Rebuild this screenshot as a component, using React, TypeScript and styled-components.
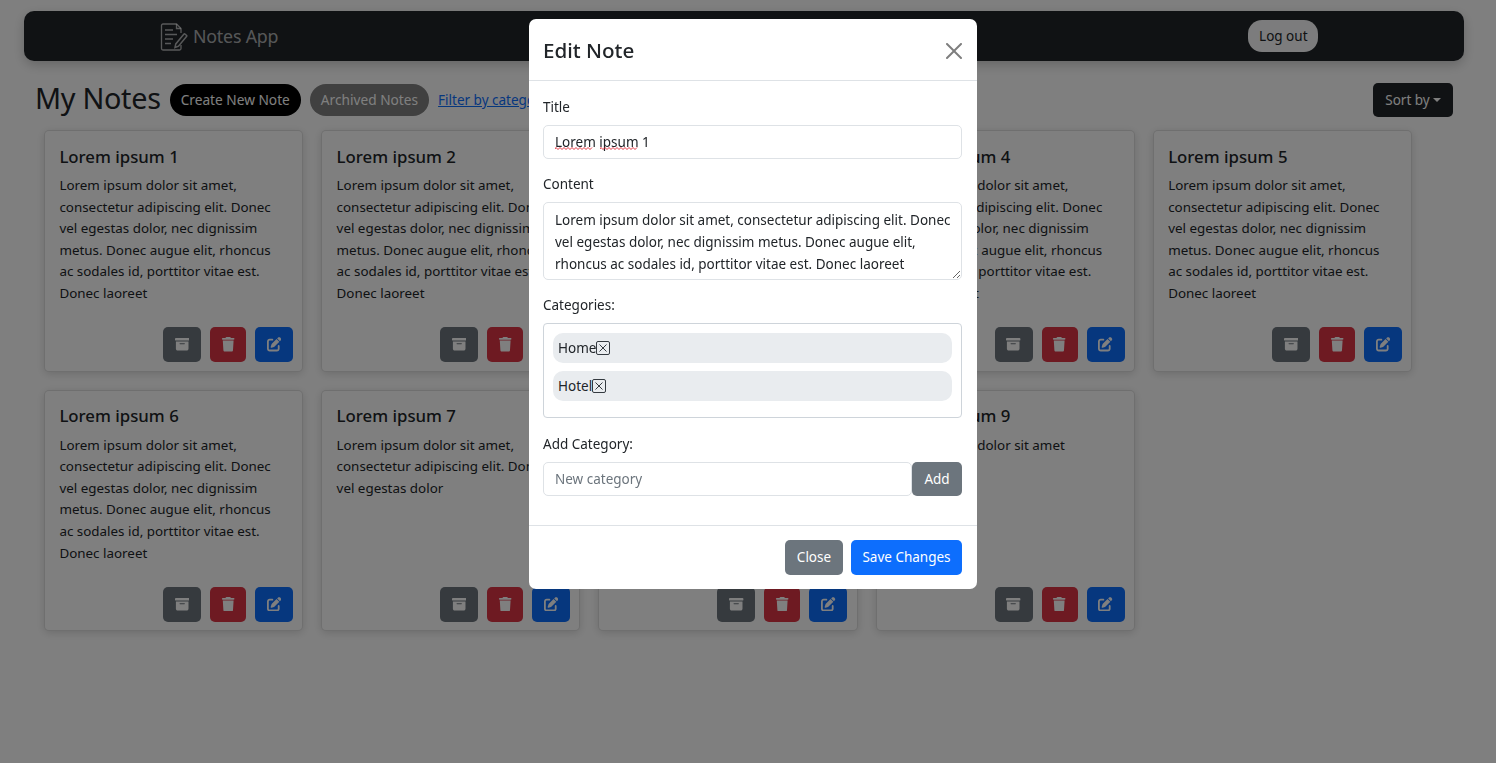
import styled, { createGlobalStyle } from "styled-components";
import { FaBoxArchive, FaTrash, FaPenToSquare } from "react-icons/fa6";

const GlobalStyle = createGlobalStyle`
	html, body {
		margin: 0;
		background: #fff;
		color: #212529;
		font-family: "Noto Sans", "Open Sans", sans-serif;
		font-size: 14.4px;
		line-height: 1.5;
	}
	* {
		box-sizing: border-box;
	}
`;

const Page = styled.div`
	min-height: 763px;
	padding: 11px 32px 0 24px;
`;

const Navbar = styled.nav`
	display: flex;
	align-items: center;
	height: 50px;
	padding-left: 136px;
	background: #212529;
	border-radius: 10px;
	box-shadow: 0 4px 12px rgba(0, 0, 0, 0.2);
`;

const Brand = styled.a`
	display: flex;
	align-items: center;
	gap: 5px;
	padding-top: 1px;
	color: rgba(255, 255, 255, 0.65);
	font-size: 17.8px;
	letter-spacing: -0.2px;
`;

const LogoutButton = styled.button`
	margin-left: 970px;
	width: 70px;
	height: 32px;
	padding: 0;
	border: none;
	border-radius: 14px;
	background: #f8f9fa;
	color: #212529;
	font: inherit;
	font-size: 13.5px;
`;

const Toolbar = styled.div`
	display: flex;
	align-items: center;
	height: 34px;
	margin: 22px 11px 13px 11px;
`;

const Heading = styled.h1`
	margin: -4px 9px 0 0;
	font-size: 28.8px;
	font-weight: 400;
	letter-spacing: -0.3px;
	line-height: 1.2;
`;

const PillButton = styled.button<{ $archived?: boolean }>`
	height: 32px;
	margin-right: 9px;
	padding: 0 11px;
	border: none;
	border-radius: 16px;
	background: ${(p) => (p.$archived ? "#808080" : "#000")};
	color: #fff;
	font: inherit;
	font-size: 13.7px;
	white-space: nowrap;
`;

const FilterLink = styled.a`
	color: #0d6efd;
	font-size: 13.5px;
	text-decoration: underline;
`;

const SortButton = styled.button`
	display: flex;
	align-items: center;
	gap: 3px;
	width: 80px;
	height: 34px;
	margin-left: auto;
	justify-content: center;
	border: none;
	border-radius: 5px;
	background: #212529;
	color: #fff;
	font: inherit;
	font-size: 13.5px;
`;

const Caret = styled.span`
	border-top: 4px solid currentColor;
	border-left: 4px solid transparent;
	border-right: 4px solid transparent;
`;

const CardGrid = styled.div`
	display: flex;
	flex-wrap: wrap;
	gap: 18px;
	padding-left: 20px;
`;

const Card = styled.article`
	display: flex;
	flex-direction: column;
	width: 259.2px;
	height: 241.6px;
	padding: 14px 9.2px 8.6px 14.4px;
	background: #fff;
	border: 1px solid rgba(0, 0, 0, 0.125);
	border-radius: 5px;
	box-shadow: 0 2px 8px rgba(0, 0, 0, 0.15);
`;

const CardTitle = styled.h5`
	margin: 0 0 8.4px;
	padding-top: 1.6px;
	font-size: 16.8px;
	font-weight: 500;
	line-height: 20px;
`;

const CardText = styled.p`
	flex: 1;
	margin: 0;
	padding-right: 11px;
	font-size: 13.4px;
	line-height: 21.6px;
`;

const CardActions = styled.div`
	display: flex;
	justify-content: flex-end;
	gap: 9px;
`;

const IconButton = styled.button<{ $bg: string; $w: number }>`
	display: flex;
	align-items: center;
	justify-content: center;
	width: ${(p) => p.$w}px;
	height: 35px;
	padding: 0;
	border: none;
	border-radius: 5px;
	background: ${(p) => p.$bg};
	color: #fff;
	font-size: 14.4px;
`;

const Backdrop = styled.div`
	position: fixed;
	inset: 0;
	display: flex;
	justify-content: center;
	align-items: flex-start;
	padding: 19px 0 0 10px;
	background: rgba(0, 0, 0, 0.5);
`;

const Modal = styled.div`
	width: 448px;
	height: 570px;
	background: #fff;
	border-radius: 7px;
`;

const ModalHeader = styled.header`
	display: flex;
	align-items: center;
	justify-content: space-between;
	height: 62px;
	padding: 2px 15px 0 14px;
	border-bottom: 1px solid #dee2e6;
`;

const ModalTitle = styled.h4`
	margin: 0;
	font-size: 20.6px;
	font-weight: 500;
	line-height: 1.5;
`;

const CloseButton = styled.button`
	display: flex;
	width: 16px;
	height: 16px;
	padding: 0;
	border: none;
	background: none;
	opacity: 0.5;
`;

const ModalBody = styled.div`
	height: 445px;
	padding: 16px 15px 0 14px;
	border-bottom: 1px solid #dee2e6;
`;

const Label = styled.label`
	display: block;
	height: 21.6px;
	margin-bottom: 6.4px;
	font-size: 13.5px;
	line-height: 21.6px;
`;

const Group = styled.div`
	margin-bottom: 15px;
`;

const TitleField = styled.div`
	position: relative;
`;

const TextInput = styled.input`
	display: block;
	flex: 1;
	width: 100%;
	min-width: 0;
	height: 34px;
	padding: 0 11px;
	border: 1px solid #dee2e6;
	border-radius: 5px;
	color: #212529;
	font: inherit;
	font-size: 13.5px;
	outline: none;
	&::placeholder {
		color: #6c757d;
	}
`;

const SpellMark = styled.svg<{ $left: number }>`
	position: absolute;
	left: ${(p) => p.$left}px;
	top: 22px;
	pointer-events: none;
`;

const TextArea = styled.textarea`
	display: block;
	width: 100%;
	height: 78px;
	padding: 6px 8px 5px 11px;
	border: 1px solid #dee2e6;
	border-radius: 5px;
	color: #212529;
	font: inherit;
	font-size: 13.5px;
	line-height: 22px;
	overflow: hidden;
	outline: none;
`;

const CategoryBox = styled.div`
	display: flex;
	flex-direction: column;
	gap: 8px;
	height: 95px;
	margin-bottom: 16px;
	padding: 9px;
	border: 1px solid #ced4da;
	border-radius: 4px;
`;

const Chip = styled.div`
	display: flex;
	align-items: center;
	height: 30px;
	padding: 0 5px;
	border-radius: 10px;
	background: #e9ecef;
	font-size: 13.5px;
`;

const ChipRemove = styled.button`
	display: flex;
	align-items: center;
	justify-content: center;
	width: 14px;
	height: 14px;
	padding: 0;
	border: 1px solid #343a40;
	border-radius: 2px;
	background: transparent;
	color: #343a40;
`;

const AddRow = styled.div`
	display: flex;
`;

const SolidButton = styled.button<{ $primary?: boolean; $w: number; $h: number }>`
	flex: none;
	width: ${(p) => p.$w}px;
	height: ${(p) => p.$h}px;
	padding: 0;
	border: none;
	border-radius: 5px;
	background: ${(p) => (p.$primary ? "#0d6efd" : "#6c757d")};
	color: #fff;
	font: inherit;
	font-size: 13.5px;
`;

const ModalFooter = styled.footer`
	display: flex;
	justify-content: flex-end;
	gap: 8px;
	padding: 14px 15px 0 0;
`;

const loremLong =
	"Lorem ipsum dolor sit amet, consectetur adipiscing elit. Donec vel egestas dolor, nec dignissim metus. Donec augue elit, rhoncus ac sodales id, porttitor vitae est. Donec laoreet";

const notes = [
	{ id: 1, text: loremLong },
	{ id: 2, text: loremLong },
	{ id: 3, text: loremLong },
	{ id: 4, text: loremLong },
	{ id: 5, text: loremLong },
	{ id: 6, text: loremLong },
	{ id: 7, text: "Lorem ipsum dolor sit amet, consectetur adipiscing elit. Donec vel egestas dolor" },
	{ id: 8, text: "Lorem ipsum dolor sit amet" },
	{ id: 9, text: "Lorem ipsum dolor sit amet" },
];

const NotesIcon = () => (
	<svg width="28" height="28" viewBox="0 0 28 28" fill="none" stroke="currentColor" strokeWidth="1.3">
		<path d="M21 10V5.5L16.5 1H3a1.5 1.5 0 0 0-1.5 1.5v23A1.5 1.5 0 0 0 3 27h16.5a1.5 1.5 0 0 0 1.5-1.5V22" />
		<path d="M16.5 1v4.5H21" />
		<path d="M5 7h8M5 11.5h12M5 16h8M5 20.5h6" strokeWidth="1.6" />
		<path d="M15 24.5l.8-3.6 8-9.6a1 1 0 0 1 1.4-.1l1.2 1a1 1 0 0 1 .1 1.4l-8 9.6z" strokeWidth="1.5" />
	</svg>
);

const SmallX = () => (
	<svg width="8" height="8" viewBox="0 0 8 8" stroke="currentColor" strokeWidth="1" fill="none">
		<path d="M.5.5l7 7M7.5.5l-7 7" />
	</svg>
);

// red wavy line the browser's spell checker puts under a word
const SpellCheck = ({ left, width }: { left: number; width: number }) => {
	let d = "M0 2";
	for (let x = 0; x < width; x += 2) {
		d += ` L${x + 1} ${x % 4 === 0 ? 0.5 : 2.5}`;
	}
	return (
		<SpellMark $left={left} width={width} height={3} viewBox={`0 0 ${width} 3`}>
			<path d={d} fill="none" stroke="#e0202c" strokeWidth="0.9" />
		</SpellMark>
	);
};

const App = () => {
	return (
		<>
			<GlobalStyle />
			<Page>
				<Navbar>
					<Brand>
						<NotesIcon />
						Notes App
					</Brand>
					<LogoutButton>Log out</LogoutButton>
				</Navbar>
				<Toolbar>
					<Heading>My Notes</Heading>
					<PillButton>Create New Note</PillButton>
					<PillButton $archived>Archived Notes</PillButton>
					<FilterLink>Filter by category</FilterLink>
					<SortButton>
						Sort by
						<Caret />
					</SortButton>
				</Toolbar>
				<CardGrid>
					{notes.map((note) => (
						<Card key={note.id}>
							<CardTitle>Lorem ipsum {note.id}</CardTitle>
							<CardText>{note.text}</CardText>
							<CardActions>
								<IconButton $bg="#6c757d" $w={38}><FaBoxArchive /></IconButton>
								<IconButton $bg="#dc3545" $w={36}><FaTrash /></IconButton>
								<IconButton $bg="#0d6efd" $w={38}><FaPenToSquare /></IconButton>
							</CardActions>
						</Card>
					))}
				</CardGrid>
			</Page>
			<Backdrop>
				<Modal>
					<ModalHeader>
						<ModalTitle>Edit Note</ModalTitle>
						<CloseButton>
							<svg width="16" height="16" viewBox="0 0 16 16" fill="#000">
								<path d="M.293.293a1 1 0 0 1 1.414 0L8 6.586 14.293.293a1 1 0 1 1 1.414 1.414L9.414 8l6.293 6.293a1 1 0 0 1-1.414 1.414L8 9.414l-6.293 6.293a1 1 0 0 1-1.414-1.414L6.586 8 .293 1.707a1 1 0 0 1 0-1.414z" />
							</svg>
						</CloseButton>
					</ModalHeader>
					<ModalBody>
						<Group>
							<Label>Title</Label>
							<TitleField>
								<TextInput readOnly value="Lorem ipsum 1" />
								<SpellCheck left={12} width={38} />
								<SpellCheck left={57} width={38} />
							</TitleField>
						</Group>
						<Group>
							<Label>Content</Label>
							<TextArea readOnly value={loremLong} />
						</Group>
						<Group>
							<Label>Categories:</Label>
							<CategoryBox>
								<Chip>Home<ChipRemove><SmallX /></ChipRemove></Chip>
								<Chip>Hotel<ChipRemove><SmallX /></ChipRemove></Chip>
							</CategoryBox>
						</Group>
						<Label>Add Category:</Label>
						<AddRow>
							<TextInput placeholder="New category" />
							<SolidButton $w={50} $h={34}>Add</SolidButton>
						</AddRow>
					</ModalBody>
					<ModalFooter>
						<SolidButton $w={58} $h={35}>Close</SolidButton>
						<SolidButton $primary $w={111} $h={35}>Save Changes</SolidButton>
					</ModalFooter>
				</Modal>
			</Backdrop>
		</>
	);
};

export default App;
